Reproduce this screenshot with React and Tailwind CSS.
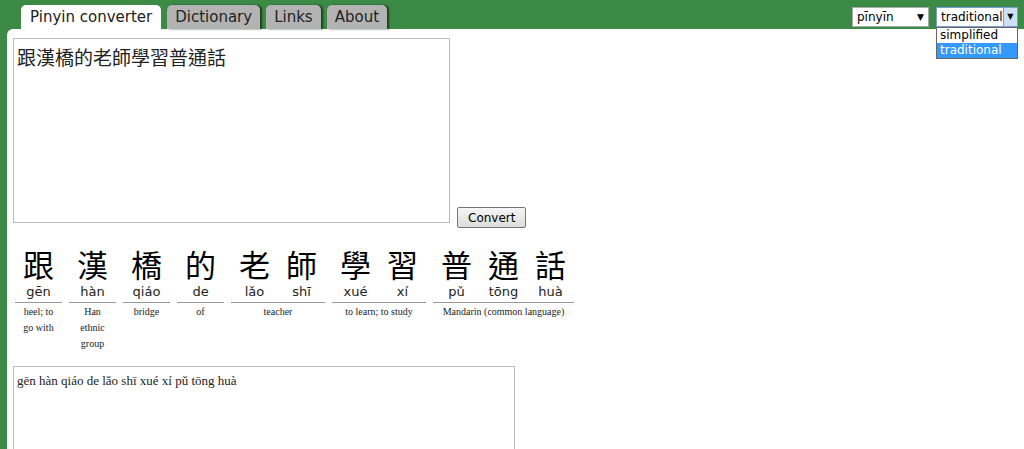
export default function App() {
  const groups = [
    { c: [["跟", "gēn"]], g: "heel; to go with" },
    { c: [["漢", "hàn"]], g: "Han ethnic group" },
    { c: [["橋", "qiáo"]], g: "bridge" },
    { c: [["的", "de"]], g: "of" },
    { c: [["老", "lǎo"], ["師", "shī"]], g: "teacher" },
    { c: [["學", "xué"], ["習", "xí"]], g: "to learn; to study" },
    { c: [["普", "pǔ"], ["通", "tōng"], ["話", "huà"]], g: "Mandarin (common language)" },
  ];
  const sans = { fontFamily: 'Verdana, "DejaVu Sans", "Noto Sans CJK TC", sans-serif' };
  return (
    <div className="w-[1024px] h-[449px] bg-[#3b8a46] overflow-hidden relative" style={sans}>
      <div className="h-[29px] flex items-end pl-[21px] gap-[6px]">
        <div className="h-[24px] px-[9px] bg-white rounded-t-[5px] text-[15px] text-[#222] leading-[24px]">Pinyin converter</div>
        {["Dictionary", "Links", "About"].map((t) => (
          <div key={t} className="h-[24px] px-[8px] bg-[#b3b3b3] rounded-t-[5px] text-[15px] text-[#222] leading-[24px] shadow-[2px_0_2px_#1d3d20]">{t}</div>
        ))}
      </div>
      <div className="absolute top-[7px] left-[852px] w-[77px] h-[20px] bg-white border border-[#aaa] text-[12px] leading-[18px] pl-[4px] flex justify-between pr-[4px]">
        <span>pīnyīn</span><span className="text-[9px]">▼</span>
      </div>
      <div className="absolute top-[7px] left-[936px] w-[82px]">
        <div className="h-[20px] bg-white border border-[#7a9cd3] text-[12px] leading-[18px] pl-[4px] flex justify-between">
          <span>traditional</span>
          <span className="w-[15px] bg-[#cfe0f5] border-l border-[#7a9cd3] text-[8px] text-center">▼</span>
        </div>
        <div className="bg-white border border-[#666] text-[12px] leading-[15px]">
          <div className="pl-[3px]">simplified</div>
          <div className="pl-[3px] bg-[#3399ff] text-white">traditional</div>
        </div>
      </div>
      <div className="ml-[7px] bg-white h-[420px] rounded-tl-[6px] pt-[9px] pl-[6px]">
        <div className="flex items-end gap-[7px]">
          <div className="w-[437px] h-[185px] border border-[#bbb] px-[3px] pt-[4px] text-[19px] text-[#222]" style={{ fontFamily: '"Noto Sans CJK TC", sans-serif' }}>跟漢橋的老師學習普通話</div>
          <button className="mb-[-5px] h-[21px] px-[10px] text-[12px] border border-[#777] rounded-[2px] bg-gradient-to-b from-[#f6f6f6] to-[#dcdcdc]">Convert</button>
        </div>
        <div className="flex gap-[7px] mt-[22px] ml-[2px] items-start">
          {groups.map((g, i) => (
            <div key={i} className="flex flex-col items-stretch">
              <div className="flex border-b border-[#999] pb-[2px]">
                {g.c.map(([h, p]) => (
                  <div key={h} className="w-[47px] flex flex-col items-center">
                    <span className="text-[31px] leading-[38px] text-black" style={{ fontFamily: '"Noto Sans CJK TC", sans-serif' }}>{h}</span>
                    <span className="text-[13px] leading-[16px] text-[#222] mt-[1px]">{p}</span>
                  </div>
                ))}
              </div>
              <div className="text-[10px] leading-[16px] text-center text-[#222] pt-[1px] mx-auto" style={{ fontFamily: '"Liberation Serif", serif', width: g.c.length > 1 ? "auto" : 40 }}>{g.g}</div>
            </div>
          ))}
        </div>
        <div className="mt-[14px] w-[502px] h-[100px] border border-[#bbb] px-[3px] pt-[4px] text-[13px] text-[#222]" style={{ fontFamily: '"Liberation Serif", serif' }}>
          gēn hàn qiáo de lǎo shī xué xí pǔ tōng huà
        </div>
      </div>
    </div>
  );
}
